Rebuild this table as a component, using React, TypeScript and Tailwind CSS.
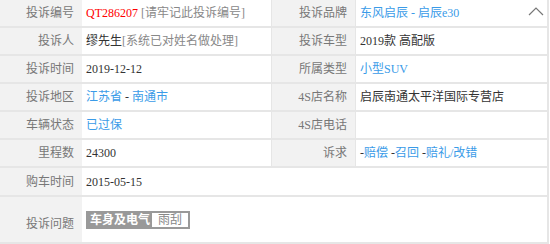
const font = { fontFamily: '"Liberation Serif", "Noto Sans CJK SC", serif' }

function Label({ children, className = '' }: { children: React.ReactNode; className?: string }) {
  return (
    <div
      className={`flex items-center justify-end bg-[#f2f2f2] pr-[8px] text-[12px] text-[#777] ${className}`}
    >
      {children}
    </div>
  )
}

function Value({ children, className = '' }: { children?: React.ReactNode; className?: string }) {
  return <div className={`flex items-center bg-white pl-[4px] text-[12px] text-[#333] ${className}`}>{children}</div>
}

export default function App() {
  const rows: [string, React.ReactNode, string, React.ReactNode][] = [
    [
      '投诉编号',
      <>
        <span className="text-[#f00]">QT286207</span>
        <span className="ml-[3px] text-[#888]">[请牢记此投诉编号]</span>
      </>,
      '投诉品牌',
      <span className="text-[#3a9be8]">东风启辰 - 启辰e30</span>,
    ],
    [
      '投诉人',
      <>
        <span className="text-[#333]">缪先生</span>
        <span className="text-[#888]">[系统已对姓名做处理]</span>
      </>,
      '投诉车型',
      '2019款 高配版',
    ],
    ['投诉时间', '2019-12-12', '所属类型', <span className="text-[#3a9be8]">小型SUV</span>],
    [
      '投诉地区',
      <span className="text-[#3a9be8]">
        江苏省 <span className="text-[#333]">-</span> 南通市
      </span>,
      '4S店名称',
      '启辰南通太平洋国际专营店',
    ],
    ['车辆状态', <span className="text-[#3a9be8]">已过保</span>, '4S店电话', ''],
    [
      '里程数',
      '24300',
      '诉求',
      <span className="text-[#3a9be8]">
        <span className="text-[#333]">-</span>赔偿 <span className="text-[#333]">-</span>召回{' '}
        <span className="text-[#333]">-</span>赔礼/改错
      </span>,
    ],
  ]

  return (
    <div className="h-[244px] w-[550px] overflow-hidden bg-white" style={font}>
      <div className="w-[549px] border-r-2 border-[#e6e6e6]">
        {rows.map(([l1, v1, l2, v2], i) => (
          <div key={i} className="flex h-[28px] border-b-2 border-[#e6e6e6]">
            <Label className="w-[82px]">{l1}</Label>
            <Value className="w-[190px] border-r border-[#e6e6e6]">{v1}</Value>
            <Label className="w-[84px] border-r border-[#e6e6e6]">{l2}</Label>
            <Value className="relative flex-1 pl-[3px]">
              {v2}
              {i === 0 && (
                <svg
                  className="absolute right-[3px] top-[6px] h-[10px] w-[16px]"
                  viewBox="0 0 16 10"
                  fill="none"
                  stroke="#777"
                  strokeWidth="1.2"
                >
                  <polyline points="1,9 8,2 15,9" />
                </svg>
              )}
            </Value>
          </div>
        ))}
        <div className="flex h-[29px] border-b-2 border-[#e6e6e6]">
          <Label className="w-[82px]">购车时间</Label>
          <Value className="flex-1">2015-05-15</Value>
        </div>
        <div className="flex h-[47px] border-b-2 border-[#e6e6e6]">
          <Label className="w-[82px] pt-[8px]">投诉问题</Label>
          <Value className="flex-1">
            <div className="flex border-2 border-[#999] text-[12px]">
              <span className="bg-[#999] px-[2px] leading-[14px] font-bold text-white">车身及电气</span>
              <span className="bg-white px-[6px] leading-[14px] text-[#888]">雨刮</span>
            </div>
          </Value>
        </div>
      </div>
    </div>
  )
}
